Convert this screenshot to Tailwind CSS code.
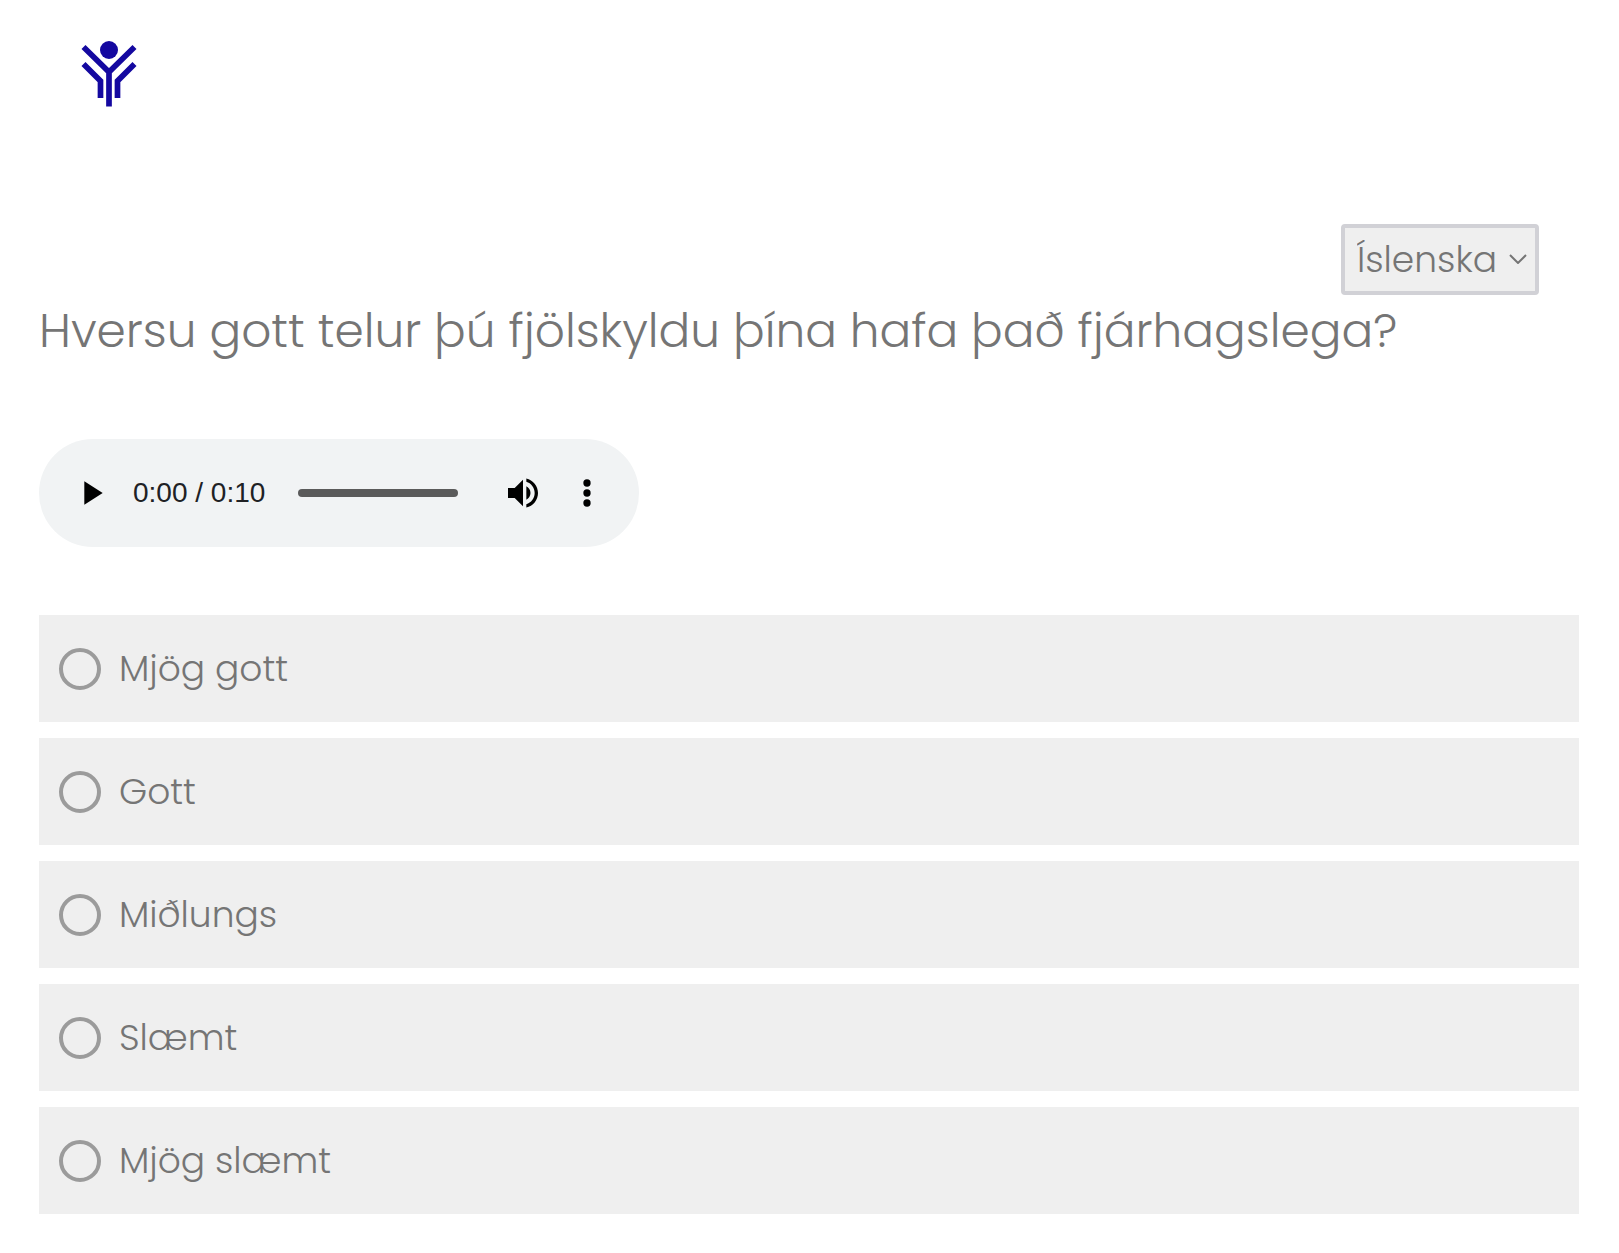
<!DOCTYPE html>
<html lang="is">
<head>
  <meta charset="UTF-8" />
  <meta name="viewport" content="width=device-width, initial-scale=1.0" />
  <title>Könnun</title>
  <script src="https://cdn.jsdelivr.net/npm/@tailwindcss/browser@4"></script>
</head>
<body class="bg-white text-[#757575] font-light font-[Poppins,Inter,sans-serif]">

  <!-- Header -->
  <header class="px-20 pt-10">
    <a href="#" aria-label="Forsíða" class="block w-15">
      <svg viewBox="0 0 60 68" class="w-15 h-[68px]" fill="none" stroke="#1408a0" stroke-width="5.700">
        <circle cx="29" cy="10" r="9" fill="#1408a0" stroke="none" />
        <path d="M3.500 7 L29 32 L54.500 7 M29 31 V66.500" />
        <path d="M3.500 24 L20.500 41 V58 M54.500 24 L37.500 41 V58" />
      </svg>
    </a>
  </header>

  <main class="pl-[39px] pr-10 pt-29 pb-10">
    <!-- Language -->
    <div class="flex justify-end pr-10">
      <div class="relative">
        <select aria-label="Tungumál" class="block appearance-none w-[198px] h-[71px] pl-3 pr-8 text-4xl font-light bg-[#efefef] border-4 border-[#d1d1d6] rounded-sm">
          <option>Íslenska</option>
          <option>English</option>
        </select>
        <svg viewBox="0 0 18 10" class="absolute right-3 top-[30px] w-[18px] h-[10px] pointer-events-none" fill="none" stroke="#757575" stroke-width="2">
          <path d="M1 1 L9 9 L17 1" />
        </svg>
      </div>
    </div>

    <h1 class="text-[47px] leading-[72px]">Hversu gott telur þú fjölskyldu þína hafa það fjárhagslega?</h1>

    <!-- Audio player -->
    <div class="mt-18 w-[600px] max-w-full h-27 px-8 flex items-center rounded-full bg-[#f1f3f4]">
      <button type="button" aria-label="Spila">
        <svg viewBox="0 0 24 24" class="size-10" fill="#000"><path d="M8 5v14l11-7z" /></svg>
      </button>
      <span class="ml-[22px] text-[28px] font-normal font-[Liberation_Sans,sans-serif] text-[#202124] whitespace-nowrap">0:00 / 0:10</span>
      <input type="range" min="0" max="10" value="0" aria-label="Staða" class="ml-[33px] mr-[45px] flex-1 min-w-0 h-2 appearance-none rounded-full bg-[#5a5a5a] [&::-webkit-slider-thumb]:appearance-none" />
      <button type="button" aria-label="Hljóðstyrkur">
        <svg viewBox="0 0 24 24" class="size-10" fill="#000">
          <path d="M3 9v6h4l5 5V4L7 9H3zm13.500 3c0-1.770-1.020-3.290-2.500-4.030v8.050c1.480-.730 2.500-2.250 2.500-4.020zM14 3.230v2.060c2.890.860 5 3.540 5 6.710s-2.110 5.850-5 6.710v2.060c4.010-.910 7-4.490 7-8.770s-2.990-7.860-7-8.770z" />
        </svg>
      </button>
      <button type="button" aria-label="Fleiri valkostir" class="ml-6">
        <svg viewBox="0 0 24 24" class="size-10" fill="#000">
          <circle cx="12" cy="6" r="2.200" /><circle cx="12" cy="12" r="2.200" /><circle cx="12" cy="18" r="2.200" />
        </svg>
      </button>
    </div>

    <!-- Answers -->
    <form class="mt-17 flex flex-col gap-4 text-4xl">
      <label class="flex items-center gap-[18px] h-[107px] px-5 bg-[#efefef]">
        <input type="radio" name="answer" class="appearance-none size-[42px] border-4 border-[#9b9b9b] rounded-full checked:bg-[#9b9b9b]" />
        Mjög gott
      </label>
      <label class="flex items-center gap-[18px] h-[107px] px-5 bg-[#efefef]">
        <input type="radio" name="answer" class="appearance-none size-[42px] border-4 border-[#9b9b9b] rounded-full checked:bg-[#9b9b9b]" />
        Gott
      </label>
      <label class="flex items-center gap-[18px] h-[107px] px-5 bg-[#efefef]">
        <input type="radio" name="answer" class="appearance-none size-[42px] border-4 border-[#9b9b9b] rounded-full checked:bg-[#9b9b9b]" />
        Miðlungs
      </label>
      <label class="flex items-center gap-[18px] h-[107px] px-5 bg-[#efefef]">
        <input type="radio" name="answer" class="appearance-none size-[42px] border-4 border-[#9b9b9b] rounded-full checked:bg-[#9b9b9b]" />
        Slæmt
      </label>
      <label class="flex items-center gap-[18px] h-[107px] px-5 bg-[#efefef]">
        <input type="radio" name="answer" class="appearance-none size-[42px] border-4 border-[#9b9b9b] rounded-full checked:bg-[#9b9b9b]" />
        Mjög slæmt
      </label>
    </form>
  </main>

</body>
</html>
